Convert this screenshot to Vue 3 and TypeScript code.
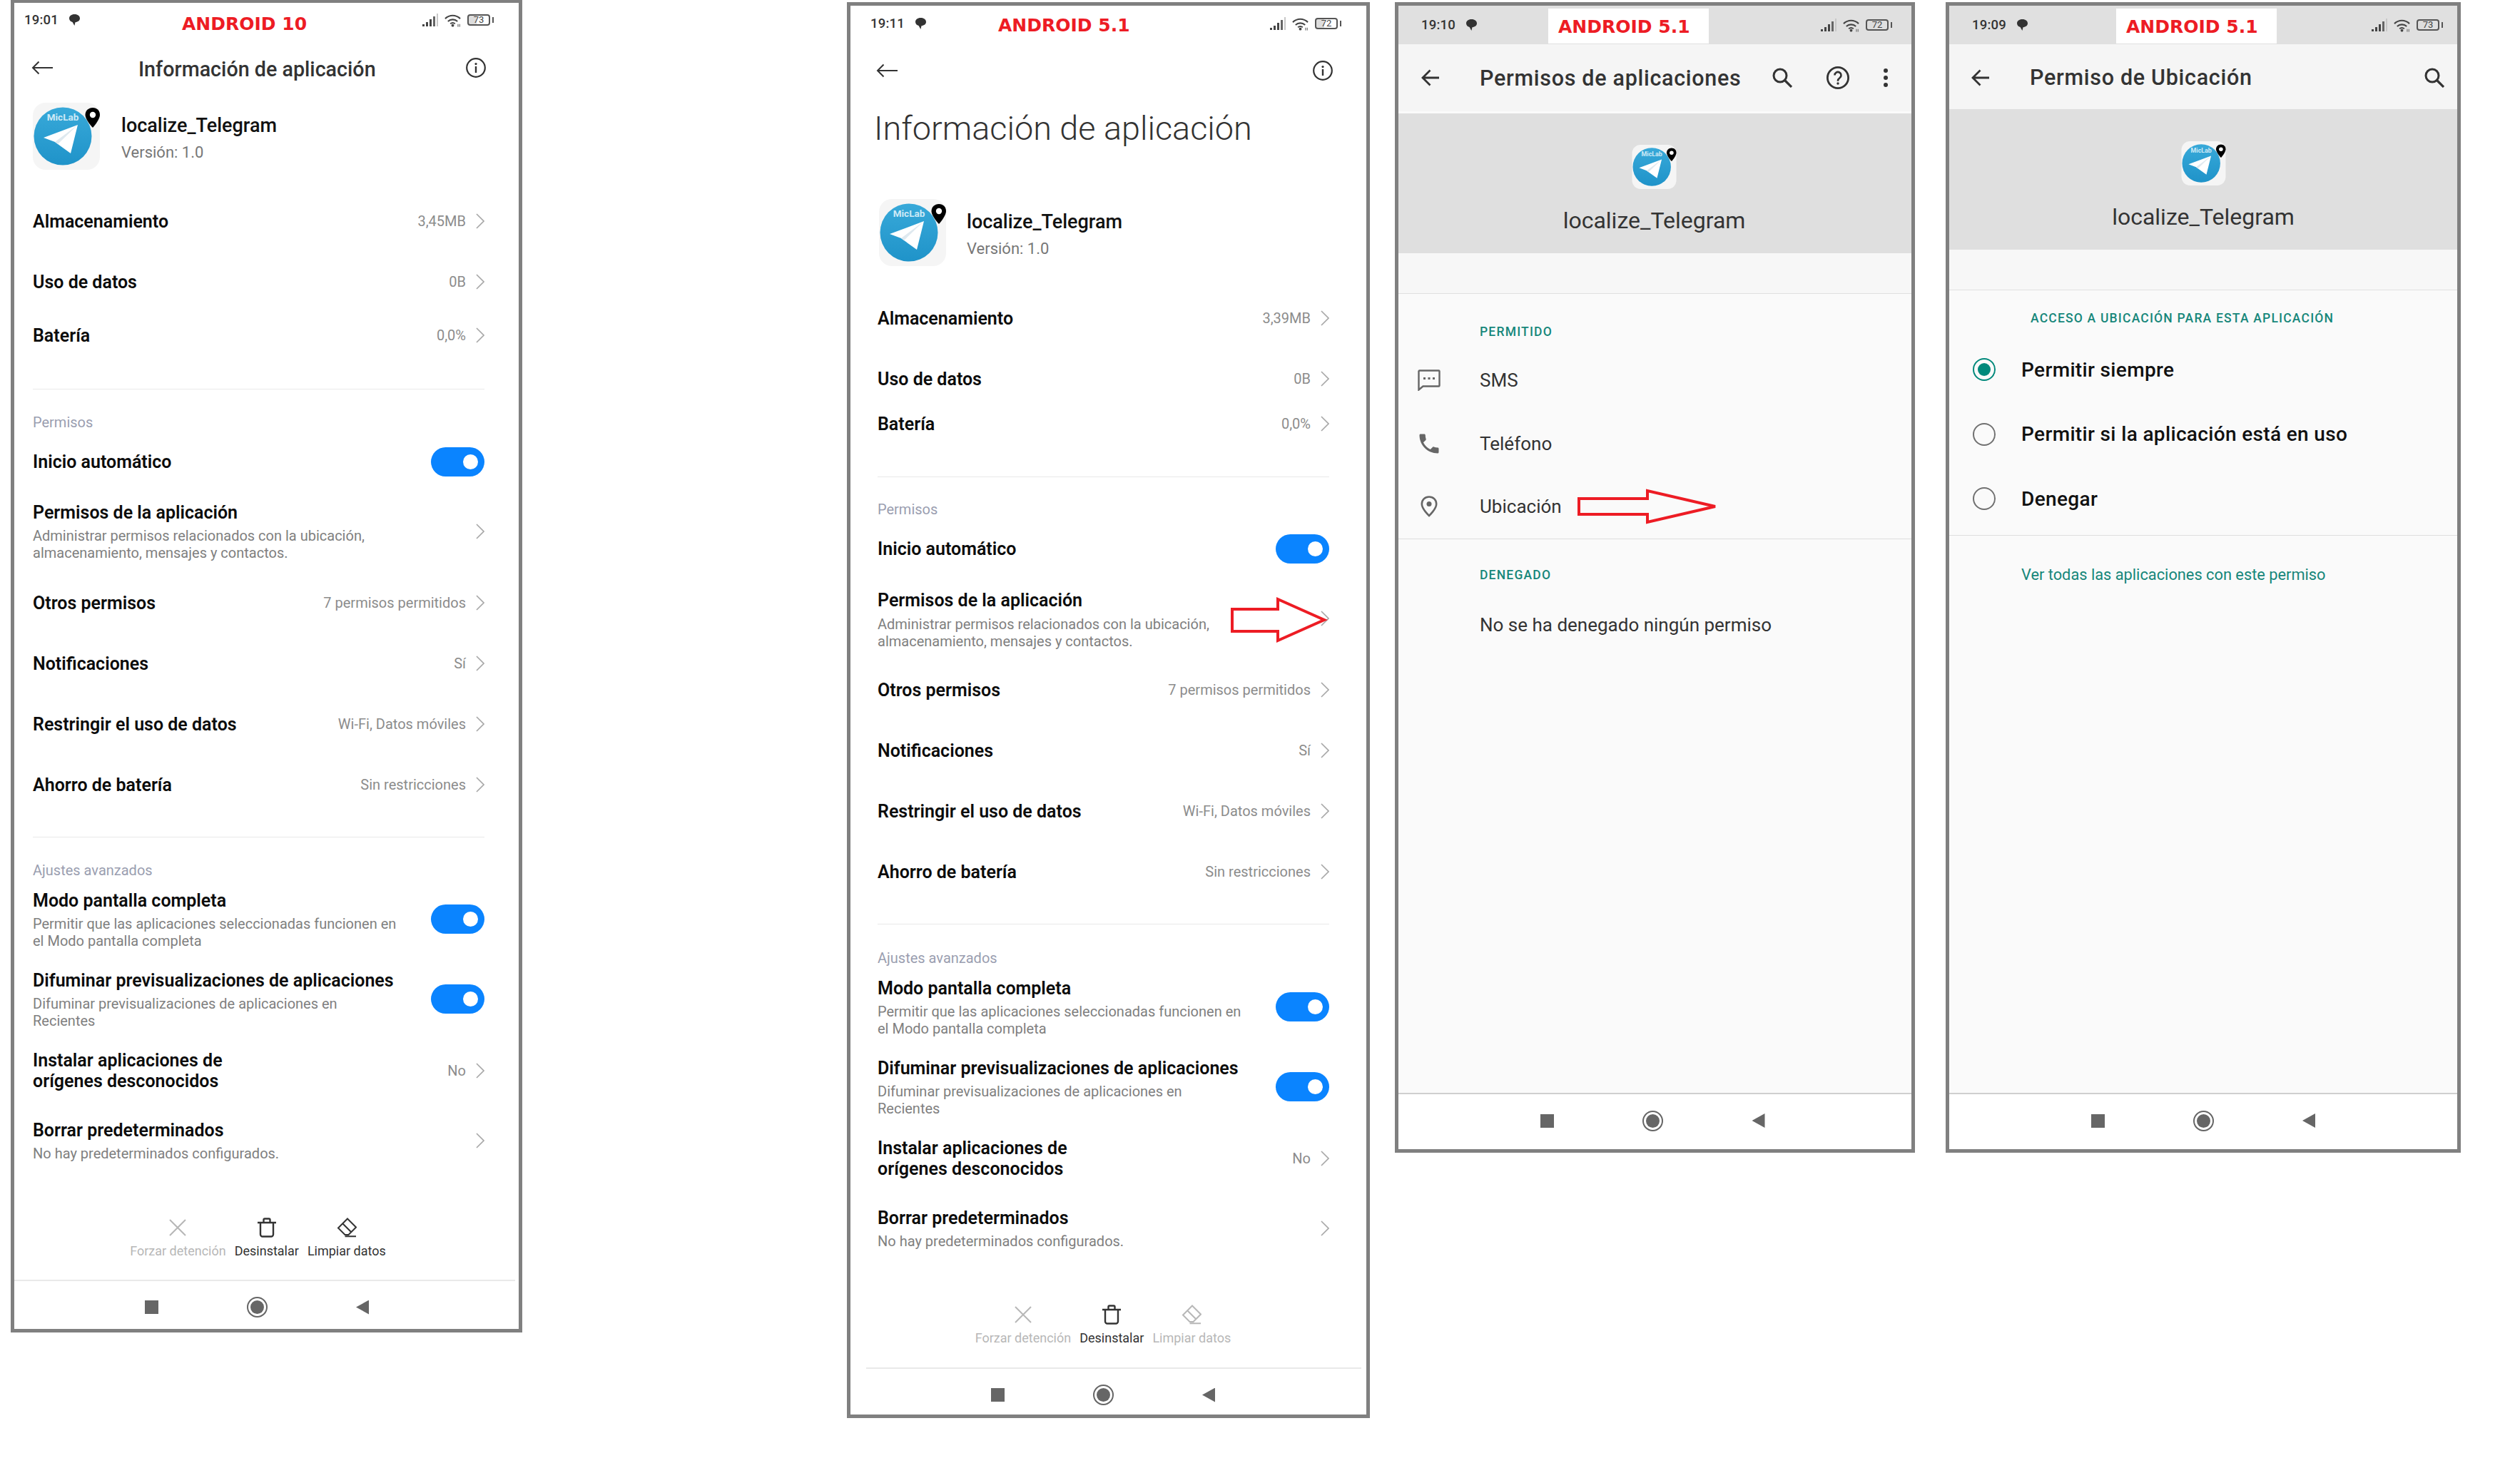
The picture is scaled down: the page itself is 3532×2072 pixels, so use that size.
<script setup lang="ts">
interface Row {
  title: string[]
  sub?: string[]
  value?: string
  toggle?: boolean
  cls?: string
}

interface MiuiPhone {
  cls: string
  time: string
  label: string
  battery: string
  version: string
  cleanOff: boolean
  top: Row[]
  perms: Row[]
  advanced: Row[]
}

const makePhone = (cls: string, time: string, label: string, battery: string, storage: string, cleanOff: boolean): MiuiPhone => ({
  cls,
  time,
  label,
  battery,
  version: 'Versión: 1.0',
  cleanOff,
  top: [
    { title: ['Almacenamiento'], value: storage },
    { title: ['Uso de datos'], value: '0B' },
    { title: ['Batería'], value: '0,0%', cls: 'bat' }
  ],
  perms: [
    { title: ['Inicio automático'], toggle: true, cls: 'auto' },
    {
      title: ['Permisos de la aplicación'],
      sub: ['Administrar permisos relacionados con la ubicación,', 'almacenamiento, mensajes y contactos.'],
      cls: 'tall'
    },
    { title: ['Otros permisos'], value: '7 permisos permitidos' },
    { title: ['Notificaciones'], value: 'Sí' },
    { title: ['Restringir el uso de datos'], value: 'Wi-Fi, Datos móviles' },
    { title: ['Ahorro de batería'], value: 'Sin restricciones' }
  ],
  advanced: [
    {
      title: ['Modo pantalla completa'],
      sub: ['Permitir que las aplicaciones seleccionadas funcionen en', 'el Modo pantalla completa'],
      toggle: true,
      cls: 'adv'
    },
    {
      title: ['Difuminar previsualizaciones de aplicaciones'],
      sub: ['Difuminar previsualizaciones de aplicaciones en', 'Recientes'],
      toggle: true,
      cls: 'adv'
    },
    { title: ['Instalar aplicaciones de', 'orígenes desconocidos'], value: 'No', cls: 'install' },
    { title: ['Borrar predeterminados'], sub: ['No hay predeterminados configurados.'], cls: 'clear' }
  ]
})

const miuiPhones: MiuiPhone[] = [
  makePhone('p1', '19:01', 'ANDROID 10', '73', '3,45MB', false),
  makePhone('p2', '19:11', 'ANDROID 5.1', '72', '3,39MB', true)
]

const radios = [
  { text: 'Permitir siempre', on: true },
  { text: 'Permitir si la aplicación está en uso', on: false },
  { text: 'Denegar', on: false }
]
</script>

<template>
  <div class="page">
    <svg class="defs" width="0" height="0">
      <defs>
        <linearGradient id="tg" x1="0" y1="0" x2="0" y2="1">
          <stop offset="0" stop-color="#38a9d9" />
          <stop offset="1" stop-color="#1f93c9" />
        </linearGradient>
        <symbol id="app-icon" viewBox="0 0 94 94">
          <rect x="0" y="0" width="94" height="94" rx="18" fill="#f5f5f5" />
          <circle cx="42" cy="47" r="40.5" fill="url(#tg)" />
          <text x="42" y="25" text-anchor="middle" class="mic">MicLab</text>
          <path d="M63 31 15 49l16 6 4 3 18 13z" fill="#fff" />
          <path d="M63 31 31 55l4 3z" fill="#dfe9ef" />
          <path d="M84 7c-6 0-10.500 4.300-10.500 10 0 7 10.500 18 10.500 18s10-11 10-18c0-5.700-4-10-10-10z" fill="#000" />
          <circle cx="84" cy="17" r="4.200" fill="#fff" />
        </symbol>
        <symbol id="bubble" viewBox="0 0 17 18">
          <path d="M8.500 1C3.900 1 1 3.600 1 6.800c0 2.600 2 4.700 4.600 5.300L8.400 17l1.100-4.800c3.800-.3 6.500-2.400 6.500-5.400C16 3.600 13.100 1 8.500 1z" fill="currentColor" />
        </symbol>
        <symbol id="signal" viewBox="0 0 22 18">
          <rect x="0" y="15" width="3" height="3" fill="#444" />
          <rect x="5" y="12" width="3" height="6" fill="#444" />
          <rect x="10" y="8" width="3" height="10" fill="#444" />
          <rect x="15" y="4" width="3" height="14" fill="#666" />
          <rect x="20" y="0" width="2" height="18" fill="#c8c8c8" />
        </symbol>
        <symbol id="wifi" viewBox="0 0 24 19">
          <path d="M1 7c6.500-6 15.500-6 22 0M5 11c4-3.600 10-3.600 14 0" fill="none" stroke="#444" stroke-width="2.200" />
          <path d="M8.500 14.500c2-1.600 5-1.600 7 0" fill="none" stroke="#444" stroke-width="2" />
          <circle cx="12" cy="17" r="2" fill="#444" />
          <rect x="19" y="15" width="1.500" height="4" fill="#888" />
          <rect x="21.500" y="15" width="1.500" height="4" fill="#888" />
        </symbol>
        <symbol id="chev" viewBox="0 0 12 22">
          <path d="M1 1l10 10L1 21" fill="none" stroke="#a8a8a8" stroke-width="1.700" />
        </symbol>
        <symbol id="back-thin" viewBox="0 0 30 20">
          <path d="M30 10H2M10.500 1.500 2 10l8.500 8.500" fill="none" stroke="#333" stroke-width="2" />
        </symbol>
        <symbol id="back-bold" viewBox="0 0 26 26">
          <path d="M26 13H3M13.500 2.500 3 13l10.500 10.500" fill="none" stroke="#333" stroke-width="2.800" />
        </symbol>
        <symbol id="info" viewBox="0 0 28 28">
          <circle cx="14" cy="14" r="12.800" fill="none" stroke="#333" stroke-width="2.200" />
          <rect x="12.800" y="12" width="2.400" height="9" fill="#333" />
          <circle cx="14" cy="8.600" r="1.600" fill="#333" />
        </symbol>
        <symbol id="search" viewBox="0 0 28 28">
          <circle cx="11" cy="11" r="9" fill="none" stroke="#333" stroke-width="3" />
          <path d="M17.500 17.500 27 27" stroke="#333" stroke-width="3.200" />
        </symbol>
        <symbol id="help" viewBox="0 0 32 32">
          <circle cx="16" cy="16" r="14.600" fill="none" stroke="#333" stroke-width="2.800" />
          <path d="M11.500 12.500a4.500 4.500 0 1 1 7 3.700c-1.700 1.200-2.500 2-2.500 4v.5" fill="none" stroke="#333" stroke-width="2.600" />
          <circle cx="16" cy="24" r="1.700" fill="#333" />
        </symbol>
        <symbol id="dots" viewBox="0 0 6 26">
          <circle cx="3" cy="3" r="3" fill="#333" />
          <circle cx="3" cy="13" r="3" fill="#333" />
          <circle cx="3" cy="23" r="3" fill="#333" />
        </symbol>
        <symbol id="x-icon" viewBox="0 0 28 28">
          <path d="M3 3l22 22M25 3 3 25" fill="none" stroke="currentColor" stroke-width="2" />
        </symbol>
        <symbol id="trash" viewBox="0 0 28 28">
          <path d="M1 7h26M5 7v16.500A3 3 0 0 0 8 26.500h12a3 3 0 0 0 3-3V7M9.500 7V3a1.500 1.500 0 0 1 1.500-1.500h6A1.500 1.500 0 0 1 18.500 3v4" fill="none" stroke="currentColor" stroke-width="2.400" />
        </symbol>
        <symbol id="eraser" viewBox="0 0 28 28">
          <path d="M15 1.500 27 13.500 16.500 24h-5L2 14.500zM8 8l12.500 12.500M11.500 26.300H27" fill="none" stroke="currentColor" stroke-width="2" />
        </symbol>
        <symbol id="sms" viewBox="0 0 32 30">
          <path d="M1.500 2.500a1 1 0 0 1 1-1h27a1 1 0 0 1 1 1v20a1 1 0 0 1-1 1H7.500l-6 5z" fill="none" stroke="#666" stroke-width="2.400" />
          <rect x="8" y="11" width="3" height="3" fill="#666" />
          <rect x="14.500" y="11" width="3" height="3" fill="#666" />
          <rect x="21" y="11" width="3" height="3" fill="#666" />
        </symbol>
        <symbol id="call" viewBox="0 0 24 24">
          <path d="M6.600 10.800c1.400 2.800 3.800 5.100 6.600 6.600l2.200-2.200c.3-.3.700-.4 1-.2 1.100.4 2.300.6 3.600.6.600 0 1 .4 1 1V20c0 .6-.4 1-1 1C10.600 21 3 13.400 3 4c0-.6.400-1 1-1h3.500c.6 0 1 .4 1 1 0 1.200.2 2.400.6 3.600.1.300 0 .7-.2 1z" fill="#666" />
        </symbol>
        <symbol id="place" viewBox="0 0 24 30">
          <path d="M12 1.500C6 1.500 1.800 6 1.800 11.500 1.800 18.500 12 28 12 28s10.200-9.500 10.200-16.500C22.200 6 18 1.500 12 1.500z" fill="none" stroke="#666" stroke-width="2.600" />
          <circle cx="12" cy="11.500" r="3.500" fill="#666" />
        </symbol>
      </defs>
    </svg>

    <!-- MIUI app info screens -->
    <section v-for="p in miuiPhones" :key="p.cls" class="phone miui" :class="p.cls">
      <div class="android">{{ p.label }}</div>
      <div class="status">
        <span class="time">{{ p.time }}</span>
        <svg class="bubble"><use href="#bubble" /></svg>
        <span class="spring"></span>
        <svg class="signal"><use href="#signal" /></svg>
        <svg class="wifi"><use href="#wifi" /></svg>
        <span class="batt">{{ p.battery }}</span>
      </div>
      <div class="bar">
        <svg class="back-thin"><use href="#back-thin" /></svg>
        <span v-if="p.cls === 'p1'" class="bar-title">Información de aplicación</span>
        <span class="spring"></span>
        <svg class="info"><use href="#info" /></svg>
      </div>
      <h1 v-if="p.cls === 'p2'" class="big-title">Información de aplicación</h1>
      <div class="app">
        <svg class="app-icon"><use href="#app-icon" /></svg>
        <div class="app-text">
          <div class="app-name">localize_Telegram</div>
          <div class="app-ver">{{ p.version }}</div>
        </div>
      </div>

      <div v-for="r in p.top" :key="r.title[0]" class="row" :class="r.cls">
        <div class="row-text">
          <div v-for="t in r.title" :key="t" class="row-title">{{ t }}</div>
        </div>
        <span class="val">{{ r.value }}</span>
        <svg class="chev"><use href="#chev" /></svg>
      </div>
      <div class="rule rule-a"></div>

      <div class="group-label first">Permisos</div>
      <div v-for="r in p.perms" :key="r.title[0]" class="row" :class="r.cls">
        <div class="row-text">
          <div v-for="t in r.title" :key="t" class="row-title">{{ t }}</div>
          <div v-if="r.sub" class="subs">
            <div v-for="s in r.sub" :key="s" class="row-sub">{{ s }}</div>
          </div>
        </div>
        <span v-if="r.value" class="val">{{ r.value }}</span>
        <div v-if="r.toggle" class="toggle"></div>
        <svg v-else class="chev"><use href="#chev" /></svg>
      </div>
      <div class="rule rule-b"></div>

      <div class="group-label second">Ajustes avanzados</div>
      <div v-for="r in p.advanced" :key="r.title[0]" class="row" :class="r.cls">
        <div class="row-text">
          <div v-for="t in r.title" :key="t" class="row-title">{{ t }}</div>
          <div v-if="r.sub" class="subs">
            <div v-for="s in r.sub" :key="s" class="row-sub">{{ s }}</div>
          </div>
        </div>
        <span v-if="r.value" class="val">{{ r.value }}</span>
        <div v-if="r.toggle" class="toggle"></div>
        <svg v-else class="chev"><use href="#chev" /></svg>
      </div>

      <div class="actions">
        <div class="action off">
          <svg class="act-x"><use href="#x-icon" /></svg>
          <span>Forzar detención</span>
        </div>
        <div class="action">
          <svg><use href="#trash" /></svg>
          <span>Desinstalar</span>
        </div>
        <div class="action" :class="{ off: p.cleanOff }">
          <svg><use href="#eraser" /></svg>
          <span>Limpiar datos</span>
        </div>
      </div>
      <div class="nav">
        <i class="nav-sq"></i><i class="nav-ci"></i><i class="nav-tr"></i>
      </div>

      <svg v-if="p.cls === 'p2'" class="arrow arrow-perm" viewBox="0 0 140 64">
        <polygon points="5,17 69,17 69,3 134,32 69,61 69,48 5,48" />
      </svg>
    </section>

    <!-- Permisos de aplicaciones -->
    <section class="phone aosp p3">
      <div class="android boxed">ANDROID 5.1</div>
      <div class="status">
        <span class="time">19:10</span>
        <svg class="bubble"><use href="#bubble" /></svg>
        <span class="spring"></span>
        <svg class="signal"><use href="#signal" /></svg>
        <svg class="wifi"><use href="#wifi" /></svg>
        <span class="batt">72</span>
      </div>
      <div class="toolbar">
        <svg class="back-bold"><use href="#back-bold" /></svg>
        <span class="tool-title">Permisos de aplicaciones</span>
        <span class="spring"></span>
        <svg class="search"><use href="#search" /></svg>
        <svg class="help"><use href="#help" /></svg>
        <svg class="dots"><use href="#dots" /></svg>
      </div>
      <div class="hero">
        <svg class="hero-icon"><use href="#app-icon" /></svg>
        <div class="hero-name">localize_Telegram</div>
      </div>
      <div class="content">
        <div class="gap-line"></div>
        <div class="caption cap-allowed">PERMITIDO</div>
        <div class="perm">
          <span class="perm-ic"><svg class="ic-sms"><use href="#sms" /></svg></span>SMS
        </div>
        <div class="perm">
          <span class="perm-ic"><svg class="ic-call"><use href="#call" /></svg></span>Teléfono
        </div>
        <div class="perm">
          <span class="perm-ic"><svg class="ic-place"><use href="#place" /></svg></span>Ubicación
        </div>
        <div class="thin-line"></div>
        <div class="caption cap-denied">DENEGADO</div>
        <div class="none-text">No se ha denegado ningún permiso</div>
      </div>
      <div class="nav">
        <i class="nav-sq"></i><i class="nav-ci"></i><i class="nav-tr"></i>
      </div>
      <svg class="arrow arrow-loc" viewBox="0 0 197 50">
        <polygon points="3,14 99,14 99,3 194,25 99,47 99,36 3,36" />
      </svg>
    </section>

    <!-- Permiso de Ubicacion -->
    <section class="phone aosp p4">
      <div class="android boxed">ANDROID 5.1</div>
      <div class="status">
        <span class="time">19:09</span>
        <svg class="bubble"><use href="#bubble" /></svg>
        <span class="spring"></span>
        <svg class="signal"><use href="#signal" /></svg>
        <svg class="wifi"><use href="#wifi" /></svg>
        <span class="batt">73</span>
      </div>
      <div class="toolbar">
        <svg class="back-bold"><use href="#back-bold" /></svg>
        <span class="tool-title">Permiso de Ubicación</span>
        <span class="spring"></span>
        <svg class="search"><use href="#search" /></svg>
      </div>
      <div class="hero">
        <svg class="hero-icon"><use href="#app-icon" /></svg>
        <div class="hero-name">localize_Telegram</div>
      </div>
      <div class="content">
        <div class="gap-line"></div>
        <div class="caption cap-access">ACCESO A UBICACIÓN PARA ESTA APLICACIÓN</div>
        <div v-for="r in radios" :key="r.text" class="radio-row">
          <span class="radio" :class="{ on: r.on }"></span>{{ r.text }}
        </div>
        <div class="thin-line line-radios"></div>
        <div class="see-all">Ver todas las aplicaciones con este permiso</div>
      </div>
      <div class="nav">
        <i class="nav-sq"></i><i class="nav-ci"></i><i class="nav-tr"></i>
      </div>
    </section>
  </div>
</template>

<style scoped>
.page {
  display: flex;
  align-items: flex-start;
  width: 3532px;
  height: 2072px;
  padding-left: 15px;
  box-sizing: border-box;
  background: #fff;
  font-family: Roboto, "Liberation Sans", sans-serif;
  overflow: hidden;
}

.defs {
  position: absolute;
}

.mic {
  font: 700 13.5px Roboto, sans-serif;
  fill: #cfeaf6;
}

.phone {
  position: relative;
  flex: none;
  display: flex;
  flex-direction: column;
  box-sizing: border-box;
  border: 5px solid #808080;
  background: #fff;
}

.p1 {
  width: 717px;
  height: 1868px;
  border-top-width: 4px;
}

.p2 {
  width: 733px;
  height: 1985px;
  margin: 3px 0 0 455px;
}

.p3 {
  width: 729px;
  height: 1613px;
  margin: 3px 0 0 35px;
}

.p4 {
  width: 722px;
  height: 1613px;
  margin: 3px 0 0 43px;
}

.spring {
  flex: 1;
}

/* annotation over the screenshot */
.android {
  position: absolute;
  font: 700 25px/30px "DejaVu Sans", sans-serif;
  color: #ed1c24;
  white-space: nowrap;
}

.p1 .android {
  left: 235px;
  top: 15px;
}

.p2 .android {
  left: 207px;
  top: 13px;
}

.android.boxed {
  top: 4px;
  width: 225px;
  height: 49px;
  box-sizing: border-box;
  padding: 11px 0 0 14px;
  background: #fff;
}

.p3 .android.boxed {
  left: 210px;
}

.p4 .android.boxed {
  left: 234px;
}

.arrow {
  position: absolute;
  overflow: visible;
}

.arrow polygon {
  fill: none;
  stroke: #ed1c24;
  stroke-width: 4;
}

.arrow-perm {
  left: 530px;
  top: 829px;
  width: 140px;
  height: 64px;
}

.arrow-loc {
  left: 250px;
  top: 677px;
  width: 197px;
  height: 50px;
}

/* status bar */
.status {
  display: flex;
  align-items: center;
  flex: none;
  color: #333;
}

.time {
  font-size: 18.5px;
  font-weight: 500;
  margin-right: 14px;
  letter-spacing: 0.2px;
}

.bubble {
  width: 17px;
  height: 18px;
}

.signal {
  width: 22px;
  height: 18px;
  margin-right: 9px;
}

.wifi {
  width: 23px;
  height: 19px;
  margin-right: 9px;
}

.batt {
  position: relative;
  box-sizing: border-box;
  width: 32px;
  height: 16px;
  margin-right: 4px;
  border: 2px solid #555;
  border-radius: 4px;
  font-size: 13px;
  line-height: 12px;
  text-align: center;
  color: #444;
  background: linear-gradient(90deg, #ddd 40%, transparent 40%);
}

.batt::after {
  content: "";
  position: absolute;
  right: -7px;
  top: 2px;
  width: 2px;
  height: 8px;
  background: #555;
}

.miui .status {
  height: 48px;
}

.p1 .status {
  padding: 0 36px 0 14px;
}

.p2 .status {
  height: 50px;
  padding: 0 36px 0 28px;
}

.aosp .status {
  height: 54px;
  background: #e0e0e0;
  padding: 0 28px 0 32px;
}

.p4 .status {
  padding-right: 21px;
}

/* MIUI header */
.bar {
  display: flex;
  align-items: center;
  flex: none;
  height: 86px;
}

.p1 .bar {
  padding: 0 46px 0 24px;
}

.p2 .bar {
  height: 82px;
  padding: 0 47px 0 36px;
}

.back-thin {
  width: 30px;
  height: 20px;
}

.bar-title {
  margin-left: 120px;
  padding-top: 3px;
  font-size: 28.7px;
  font-weight: 500;
  color: #333;
  white-space: nowrap;
}

.info {
  width: 28px;
  height: 28px;
}

.big-title {
  margin: 0;
  height: 80px;
  flex: none;
  padding-left: 33px;
  font-size: 46.8px;
  font-weight: 300;
  line-height: 80px;
  color: #333;
}

.app {
  display: flex;
  flex: none;
}

.p1 .app {
  margin-top: 6px;
  margin-bottom: 29.5px;
  padding-left: 26px;
}

.p2 .app {
  margin-top: 59px;
  margin-bottom: 30.5px;
  padding-left: 40px;
}

.app-icon {
  width: 94px;
  height: 94px;
  flex: none;
}

.app-text {
  margin: 13px 0 0 29px;
}

.p1 .app-text {
  margin-left: 30px;
}

.app-name {
  font-size: 27px;
  font-weight: 500;
  line-height: 38px;
  color: #111;
}

.app-ver {
  font-size: 22px;
  line-height: 38px;
  color: #777;
}

/* MIUI rows */
.row {
  display: flex;
  align-items: center;
  flex: none;
  height: 85px;
  white-space: nowrap;
}

.p1 .row {
  padding: 0 48px 0 26px;
}

.p2 .row {
  padding: 0 52px 0 38px;
}

.row-text {
  flex: 1;
}

.row-title {
  font-size: 25px;
  font-weight: 600;
  line-height: 33px;
  color: #0c0c0c;
}

.subs {
  margin-top: 4.5px;
}

.row-sub {
  font-size: 20px;
  line-height: 24px;
  color: #808080;
}

.val {
  font-size: 20px;
  color: #8c8c8c;
  margin-right: 14px;
}

.chev {
  width: 12px;
  height: 22px;
  flex: none;
}

.p1 .bat {
  height: 65px;
}

.p2 .bat {
  height: 41px;
}

.auto {
  height: 78px;
}

.tall {
  height: 116px;
}

.p2 .tall .row-text {
  padding-top: 3px;
}

.adv {
  height: 112px;
}

.install {
  height: 88px;
}

.install .row-title {
  line-height: 29px;
}

.clear {
  height: 108px;
}

.toggle {
  position: relative;
  flex: none;
  width: 75px;
  height: 41px;
  border-radius: 21px;
  background: #0a84ff;
}

.toggle::after {
  content: "";
  position: absolute;
  right: 9px;
  top: 10px;
  width: 21px;
  height: 21px;
  border-radius: 50%;
  background: #fff;
}

.rule {
  flex: none;
  height: 1px;
  background: #e9e9e9;
}

.p1 .rule {
  margin-left: 26px;
  margin-right: 48px;
}

.p2 .rule {
  margin-left: 38px;
  margin-right: 52px;
}

.p1 .rule-a {
  margin-top: 42px;
}

.p2 .rule-a {
  margin-top: 53px;
}

.rule-b {
  margin-top: 30px;
}

.group-label {
  flex: none;
  font-size: 20px;
  color: #9a9eb0;
}

.p1 .group-label {
  padding-left: 26px;
}

.p2 .group-label {
  padding-left: 38px;
}

.first {
  height: 34px;
  line-height: 34px;
  margin-top: 28px;
}

.p1 .first {
  margin-top: 29px;
}

.second {
  height: 26px;
  line-height: 26px;
  margin-top: 34px;
}

.p1 .second {
  margin-top: 33px;
}

/* bottom actions */
.actions {
  display: flex;
  justify-content: center;
  gap: 12px;
  flex: none;
  margin-top: 49px;
}

.p1 .actions {
  margin-top: 50px;
  padding-right: 24px;
}

.p2 .actions {
  padding-right: 15px;
}

.action {
  display: flex;
  flex-direction: column;
  align-items: center;
  color: #333;
  font-size: 18px;
  line-height: 24px;
}

.action svg {
  width: 28px;
  height: 28px;
  margin: 4px 0 7px;
}

.action.off {
  color: #b7b7b7;
}

.nav {
  display: flex;
  justify-content: center;
  align-items: center;
  flex: none;
}

.miui .nav {
  border-top: 2px solid #e9e9e9;
  height: 66px;
  padding-top: 10px;
  box-sizing: border-box;
}

.p1 .nav {
  margin-top: 28px;
  padding-right: 22px;
  margin-right: 5px;
}

.p2 .nav {
  margin-top: 29px;
  margin-left: 22px;
  margin-right: 7px;
  padding-right: 30px;
}

.aosp .nav {
  height: 79px;
  border-top: 2px solid #cfcfcf;
  padding-bottom: 3px;
  box-sizing: border-box;
}

.p3 .nav {
  padding-right: 6px;
}

.nav i {
  display: flex;
  justify-content: center;
  width: 148px;
}

.nav i::before {
  content: "";
  display: block;
  box-sizing: border-box;
  background: #666;
}

.nav-sq::before {
  width: 19px;
  height: 19px;
}

.nav-ci::before {
  width: 29px;
  height: 29px;
  padding: 3px;
  border: 2px solid #666;
  border-radius: 50%;
  background-clip: content-box !important;
}

.nav-tr::before {
  width: 18px;
  height: 20px;
  clip-path: polygon(100% 0, 100% 100%, 0 50%);
}

/* AOSP screens */
.toolbar {
  display: flex;
  align-items: center;
  flex: none;
  background: #f5f5f5;
}

.p3 .toolbar {
  height: 94px;
  padding: 0 33px 0 31px;
  border-bottom: 3px solid #fafafa;
}

.p4 .toolbar {
  height: 91px;
  padding: 2px 18px 0 30px;
  box-sizing: border-box;
}

.back-bold {
  width: 26px;
  height: 26px;
  flex: none;
}

.tool-title {
  margin-left: 57px;
  font-size: 30.5px;
  font-weight: 500;
  letter-spacing: 0.7px;
  color: #333;
  white-space: nowrap;
}

.search {
  width: 28px;
  height: 28px;
}

.help {
  width: 32px;
  height: 32px;
  margin-left: 48px;
}

.dots {
  width: 6px;
  height: 26px;
  margin-left: 48px;
}

.hero {
  flex: none;
  display: flex;
  flex-direction: column;
  align-items: center;
  box-sizing: border-box;
  height: 196px;
  padding-top: 44px;
  background: #dfdfdf;
}

.p4 .hero {
  height: 197px;
  padding-top: 45px;
}

.hero-icon {
  width: 63px;
  height: 62px;
}

.hero-name {
  margin-top: 22px;
  font-size: 32px;
  line-height: 44px;
  color: #333;
}

.p3 .hero {
  padding-right: 2px;
}

.content {
  flex: 1;
  display: flex;
  flex-direction: column;
  background: #fafafa;
}

.gap-line {
  flex: none;
  height: 57px;
  box-sizing: border-box;
  background: #f7f7f7;
  border-bottom: 1px solid #e0e0e0;
}

.caption {
  flex: none;
  height: 30px;
  font-size: 17.5px;
  font-weight: 500;
  line-height: 30px;
  letter-spacing: 1.2px;
  color: #16877a;
  padding-left: 114px;
}

.cap-allowed {
  margin-top: 38px;
}

.cap-denied {
  margin-top: 35px;
}

.cap-access {
  margin-top: 24px;
  white-space: nowrap;
}

.perm {
  display: flex;
  align-items: center;
  flex: none;
  height: 88.5px;
  padding-left: 25px;
  font-size: 26px;
  color: #333;
}

.cap-allowed + .perm {
  margin-top: 9px;
}

.perm-ic {
  display: flex;
  justify-content: center;
  width: 36px;
  margin-right: 53px;
}

.ic-sms {
  width: 32px;
  height: 30px;
}

.ic-call {
  width: 38px;
  height: 38px;
}

.ic-place {
  width: 24px;
  height: 30px;
}

.thin-line {
  flex: none;
  height: 1px;
  background: #dedede;
}

.none-text {
  flex: none;
  height: 60px;
  margin-top: 25px;
  padding-left: 114px;
  font-size: 26px;
  line-height: 60px;
  color: #333;
}

.radio-row {
  display: flex;
  align-items: center;
  flex: none;
  height: 90.5px;
  padding-left: 33px;
  font-size: 28px;
  font-weight: 500;
  letter-spacing: 0.35px;
  color: #111;
}

.cap-access + .radio-row {
  margin-top: 12px;
}

.radio {
  position: relative;
  flex: none;
  box-sizing: border-box;
  width: 32px;
  height: 32px;
  margin-right: 36px;
  border: 2.6px solid #707070;
  border-radius: 50%;
}

.radio.on {
  border-color: #00897b;
}

.radio.on::after {
  content: "";
  position: absolute;
  inset: 5px;
  border-radius: 50%;
  background: #00897b;
}

.line-radios {
  margin-top: 5px;
}

.see-all {
  flex: none;
  height: 40px;
  margin-top: 35px;
  padding-left: 101px;
  font-size: 21.8px;
  line-height: 40px;
  color: #16877a;
}
</style>

<style>
html,
body {
  background: #fff;
}
</style>
